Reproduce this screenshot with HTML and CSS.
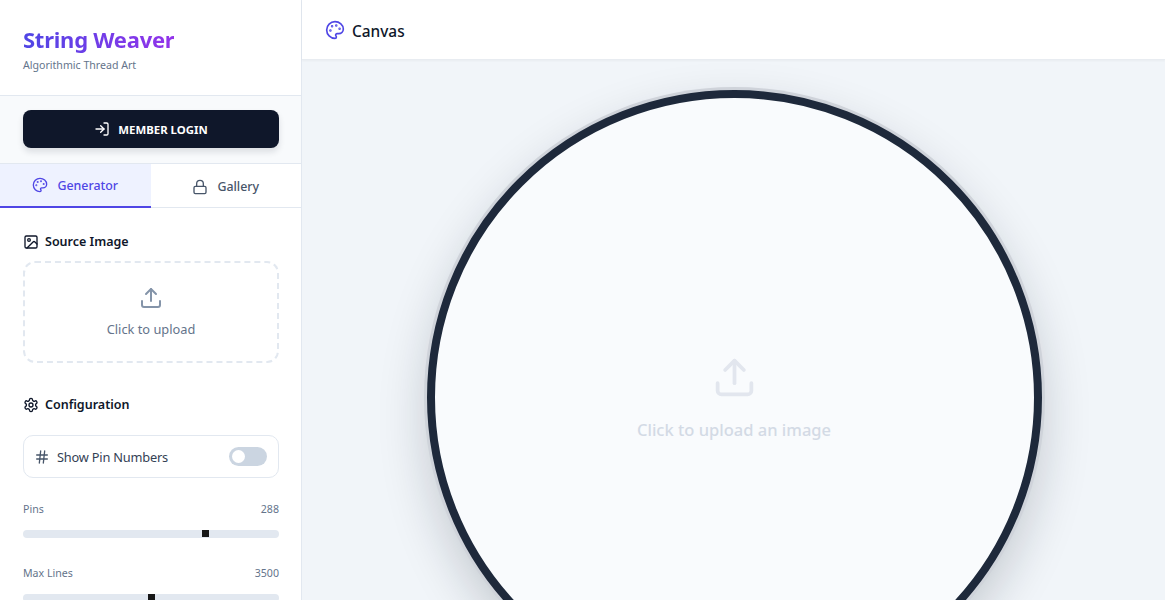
FILE: index.html
```html
<!DOCTYPE html>
<html lang="en">
<head>
    <meta charset="UTF-8">
    <title>String Weaver</title>
    <link rel="stylesheet" href="styles.css">
</head>
<body>
    <aside class="sidebar">
        <div class="brand">
            <h1>String Weaver</h1>
            <p>Algorithmic Thread Art</p>
        </div>

        <div class="login-box">
            <button class="login-btn">
                <svg class="icon" width="16" height="16" viewBox="0 0 24 24"><path d="M15 3h4a2 2 0 0 1 2 2v14a2 2 0 0 1-2 2h-4"/><path d="m10 17 5-5-5-5"/><path d="M15 12H3"/></svg>
                MEMBER LOGIN
            </button>
        </div>

        <div class="tabs">
            <div class="tab active">
                <svg class="icon" width="16" height="16" viewBox="0 0 24 24"><circle class="dot" cx="13.5" cy="6.5" r=".5"/><circle class="dot" cx="17.5" cy="10.5" r=".5"/><circle class="dot" cx="8.5" cy="7.5" r=".5"/><circle class="dot" cx="6.5" cy="12.5" r=".5"/><path d="M12 2C6.5 2 2 6.5 2 12s4.5 10 10 10c.926 0 1.648-.746 1.648-1.688 0-.437-.18-.835-.437-1.125-.29-.289-.438-.652-.438-1.125a1.64 1.64 0 0 1 1.668-1.668h1.996c3.051 0 5.555-2.503 5.555-5.554C21.965 6.012 17.461 2 12 2z"/></svg>
                Generator
            </div>
            <div class="tab">
                <svg class="icon" width="16" height="16" viewBox="0 0 24 24"><rect x="3" y="11" width="18" height="11" rx="2"/><path d="M7 11V7a5 5 0 0 1 10 0v4"/></svg>
                Gallery
            </div>
        </div>

        <div class="controls">
            <section class="source">
                <h2>
                    <svg class="icon" width="16" height="16" viewBox="0 0 24 24"><rect x="3" y="3" width="18" height="18" rx="2"/><circle cx="9" cy="9" r="2"/><path d="m21 15-3.086-3.086a2 2 0 0 0-2.828 0L6 21"/></svg>
                    Source Image
                </h2>
                <div class="dropzone">
                    <svg class="icon" width="24" height="24" viewBox="0 0 24 24"><path d="M21 15v4a2 2 0 0 1-2 2H5a2 2 0 0 1-2-2v-4"/><path d="m17 8-5-5-5 5"/><path d="M12 3v12"/></svg>
                    <span>Click to upload</span>
                </div>
            </section>

            <section class="config">
                <h2>
                    <svg class="icon" width="16" height="16" viewBox="0 0 24 24"><path d="M12.22 2h-.44a2 2 0 0 0-2 2v.18a2 2 0 0 1-1 1.73l-.43.25a2 2 0 0 1-2 0l-.15-.08a2 2 0 0 0-2.73.73l-.22.38a2 2 0 0 0 .73 2.73l.15.1a2 2 0 0 1 1 1.72v.51a2 2 0 0 1-1 1.74l-.15.09a2 2 0 0 0-.73 2.73l.22.38a2 2 0 0 0 2.73.73l.15-.08a2 2 0 0 1 2 0l.43.25a2 2 0 0 1 1 1.73V20a2 2 0 0 0 2 2h.44a2 2 0 0 0 2-2v-.18a2 2 0 0 1 1-1.73l.43-.25a2 2 0 0 1 2 0l.15.08a2 2 0 0 0 2.73-.73l.22-.39a2 2 0 0 0-.73-2.73l-.15-.08a2 2 0 0 1-1-1.74v-.5a2 2 0 0 1 1-1.74l.15-.09a2 2 0 0 0 .73-2.73l-.22-.38a2 2 0 0 0-2.73-.73l-.15.08a2 2 0 0 1-2 0l-.43-.25a2 2 0 0 1-1-1.73V4a2 2 0 0 0-2-2z"/><circle cx="12" cy="12" r="3"/></svg>
                    Configuration
                </h2>

                <div class="toggle-row">
                    <svg class="icon" width="16" height="16" viewBox="0 0 24 24"><path d="M4 9h16"/><path d="M4 15h16"/><path d="M10 3 8 21"/><path d="M16 3l-2 18"/></svg>
                    <span class="toggle-label">Show Pin Numbers</span>
                    <span class="switch"><span class="knob"></span></span>
                </div>

                <div class="slider">
                    <div class="slider-head"><span>Pins</span><span>288</span></div>
                    <div class="track"><span class="thumb" style="left: 71%"></span></div>
                </div>

                <div class="slider">
                    <div class="slider-head"><span>Max Lines</span><span>3500</span></div>
                    <div class="track"><span class="thumb" style="left: 50%"></span></div>
                </div>
            </section>
        </div>
    </aside>

    <main class="main">
        <header class="topbar">
            <svg class="icon" width="20" height="20" viewBox="0 0 24 24"><circle class="dot" cx="13.5" cy="6.5" r=".5"/><circle class="dot" cx="17.5" cy="10.5" r=".5"/><circle class="dot" cx="8.5" cy="7.5" r=".5"/><circle class="dot" cx="6.5" cy="12.5" r=".5"/><path d="M12 2C6.5 2 2 6.5 2 12s4.5 10 10 10c.926 0 1.648-.746 1.648-1.688 0-.437-.18-.835-.437-1.125-.29-.289-.438-.652-.438-1.125a1.64 1.64 0 0 1 1.668-1.668h1.996c3.051 0 5.555-2.503 5.555-5.554C21.965 6.012 17.461 2 12 2z"/></svg>
            <h2>Canvas</h2>
        </header>
        <div class="stage">
            <div class="circle">
                <svg class="icon" width="45" height="45" viewBox="0 0 24 24"><path d="M21 15v4a2 2 0 0 1-2 2H5a2 2 0 0 1-2-2v-4"/><path d="m17 8-5-5-5 5"/><path d="M12 3v12"/></svg>
                <span>Click to upload an image</span>
            </div>
        </div>
    </main>
</body>
</html>
```

FILE: styles.css
```css
* {
    margin: 0;
    padding: 0;
    box-sizing: border-box;
}

html, body {
    height: 100%;
    overflow: hidden;
}

body {
    display: flex;
    font-family: "Noto Sans", "Open Sans", sans-serif;
    color: #0f172a;
    background-color: #f1f5f9;
}

.icon {
    fill: none;
    stroke: currentColor;
    stroke-width: 2;
    stroke-linecap: round;
    stroke-linejoin: round;
    flex-shrink: 0;
}

.icon .dot {
    fill: currentColor;
}

/* sidebar */
.sidebar {
    width: 302px;
    flex-shrink: 0;
    height: 100%;
    overflow: hidden;
    background-color: white;
    border-right: 1px solid #e2e8f0;
}

.brand {
    height: 96px;
    padding: 23px 22px 0 23px;
    border-bottom: 1px solid #e2e8f0;
}

.brand h1 {
    font-size: 22px;
    line-height: 32px;
    font-weight: 700;
    letter-spacing: -0.25px;
    background: linear-gradient(90deg, #4f46e5, #9333ea);
    -webkit-background-clip: text;
    background-clip: text;
    color: transparent;
    width: fit-content;
}

.brand p {
    font-size: 10.6px;
    line-height: 16px;
    margin-top: 2px;
    color: #64748b;
}

.login-box {
    height: 68px;
    padding: 14px 22px 0 23px;
    background-color: #f8fafc;
    border-bottom: 1px solid #e2e8f0;
}

.login-btn {
    width: 100%;
    height: 38px;
    display: flex;
    align-items: center;
    justify-content: center;
    gap: 8px;
    border: none;
    border-radius: 8px;
    background-color: #0f172a;
    color: white;
    font-family: inherit;
    font-size: 11.4px;
    font-weight: 700;
    box-shadow: 0 4px 6px rgba(15, 23, 42, 0.12);
}

.tabs {
    display: flex;
    height: 44px;
    border-bottom: 1px solid #e2e8f0;
}

.tab {
    flex: 1;
    display: flex;
    align-items: center;
    justify-content: center;
    gap: 9px;
    font-size: 12.4px;
    font-weight: 500;
    color: #475569;
    padding-top: 2px;
}

.tab.active {
    color: #4f46e5;
    background-color: #eef2ff;
    border-bottom: 2px solid #4f46e5;
    margin-bottom: -1px;
    padding-top: 0;
}

.controls {
    padding: 24px 22px 23px 23px;
}

.controls h2 {
    display: flex;
    align-items: center;
    gap: 6px;
    font-size: 12.5px;
    line-height: 20px;
    font-weight: 600;
}

.dropzone {
    height: 102px;
    margin-top: 9px;
    display: flex;
    flex-direction: column;
    align-items: center;
    justify-content: center;
    gap: 10px;
    border: 2px dashed #e2e8f0;
    border-radius: 12px;
    color: #64748b;
    font-size: 12.8px;
    line-height: 18px;
}

.dropzone .icon {
    color: #8494a9;
}

.config {
    margin-top: 32px;
}

.toggle-row {
    height: 43px;
    margin-top: 20px;
    padding: 0 11px 0 10px;
    display: flex;
    align-items: center;
    gap: 7px;
    border: 1px solid #e2e8f0;
    border-radius: 10px;
    color: #475569;
}

.toggle-label {
    flex: 1;
    font-size: 12.8px;
    letter-spacing: -0.2px;
    color: #334155;
}

.switch {
    width: 38px;
    height: 19px;
    padding: 3px;
    border-radius: 10px;
    background-color: #cbd5e1;
}

.knob {
    display: block;
    width: 13px;
    height: 13px;
    border-radius: 50%;
    background-color: white;
}

.slider {
    margin-top: 23px;
}

.slider + .slider {
    margin-top: 27px;
}

.slider-head {
    display: flex;
    justify-content: space-between;
    font-size: 10.6px;
    line-height: 16px;
    color: #64748b;
}

.track {
    position: relative;
    height: 8px;
    margin-top: 13px;
    border-radius: 4px;
    background-color: #e2e8f0;
}

.thumb {
    position: absolute;
    top: 0;
    width: 7px;
    height: 7px;
    margin-left: -3px;
    background-color: #171717;
}

/* canvas area */
.main {
    flex: 1;
    min-width: 0;
    height: 100%;
    display: flex;
    flex-direction: column;
}

.topbar {
    height: 60px;
    flex-shrink: 0;
    display: flex;
    align-items: center;
    gap: 7px;
    padding: 0 23px;
    background-color: white;
    border-bottom: 1px solid #e8ecf1;
    box-shadow: 0 1px 2px rgba(0, 0, 0, 0.04);
    color: #4f46e5;
}

.topbar h2 {
    font-size: 15.4px;
    font-weight: 500;
    padding-top: 3px;
    color: #0f172a;
}

.stage {
    flex: 1;
    min-height: 0;
    display: flex;
    justify-content: center;
    padding: 30px 0 0 1px;
    overflow: hidden;
}

.circle {
    width: 615px;
    height: 615px;
    flex-shrink: 0;
    display: flex;
    flex-direction: column;
    align-items: center;
    justify-content: center;
    gap: 17.5px;
    padding-top: 2px;
    border: 8px solid #1e293b;
    border-radius: 50%;
    background-color: #f9fbfd;
    box-shadow: 0 0 0 3px #cfd3da, 0 20px 50px rgba(15, 23, 42, 0.2);
    color: #d3dae5;
    font-size: 16.5px;
    line-height: 24px;
    font-weight: 500;
}

.circle .icon {
    color: #e2e6ee;
}
```
